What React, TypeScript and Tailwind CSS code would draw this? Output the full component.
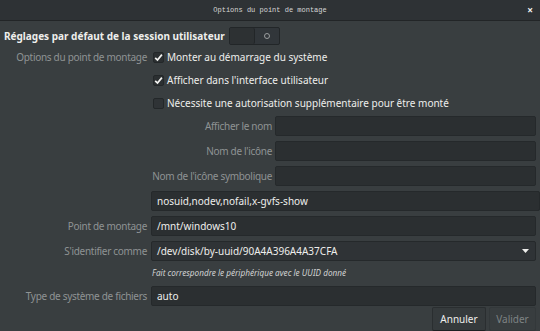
import React from 'react';

const FONT = "font-['Noto_Sans',_'Open_Sans',_sans-serif]";
const LABEL = 'text-[10px] tracking-[-0.3px] text-[#8f9394]';

const Check = ({ checked }: { checked: boolean }) => (
  <span
    className={`flex h-[11px] w-[11px] shrink-0 items-center justify-center rounded-[2px] border border-[#232729] ${
      checked ? 'bg-[#2b2f31]' : 'bg-[#2f3336]'
    }`}
  >
    {checked && (
      <svg width="9" height="9" viewBox="0 0 9 9">
        <path d="M1.2 4.8 L3.5 7.1 L7.9 1.6" fill="none" stroke="#f2f2f0" strokeWidth="1.7" />
      </svg>
    )}
  </span>
);

const Entry = ({ value, className = '' }: { value?: string; className?: string }) => (
  <div
    className={`flex h-[20px] items-center whitespace-nowrap rounded-[2px] border border-[#25292b] bg-[#2b2f31] px-[5px] text-[10px] text-[#eeeeec] ${className}`}
  >
    {value}
  </div>
);

export default function App() {
  const checks = [
    { label: 'Monter au démarrage du système', checked: true },
    { label: "Afficher dans l'interface utilisateur", checked: true },
    { label: 'Nécessite une autorisation supplémentaire pour être monté', checked: false },
  ];
  const named = ['Afficher le nom', "Nom de l'icône", "Nom de l'icône symbolique"];

  return (
    <div className={`h-[331px] w-[540px] overflow-hidden bg-[#393e40] ${FONT}`}>
      {/* title bar */}
      <div className="relative flex h-[21px] items-center justify-center border-b border-[#222527] bg-[#2e3235]">
        <span className="font-['Liberation_Mono',_monospace] text-[7px] text-[#d6d7d6]">Options du point de montage</span>
        <span className="absolute right-[7px] top-[5px] text-[10px] font-bold leading-none text-[#f4f4f4]">×</span>
      </div>

      {/* session defaults */}
      <div className="mt-[6px] flex h-[18px] items-center pl-[4px]">
        <span className="w-[225px] shrink-0 whitespace-nowrap text-[10px] font-bold text-[#eeeeec]">
          Réglages par défaut de la session utilisateur
        </span>
        <div className="flex h-[18px] w-[51px] rounded-[2px] border border-[#222628] bg-[#31363a]">
          <div className="h-full w-[25px] rounded-[2px] border-r border-[#222628] bg-[#2d3133]" />
          <div className="flex flex-1 items-center justify-center">
            <span className="h-[6px] w-[6px] rounded-full border border-[#9a9d9e]" />
          </div>
        </div>
      </div>

      {/* form */}
      <div className="mt-[1px] grid grid-cols-[147px_1fr] gap-x-[4px] pr-[4px] whitespace-nowrap">
        <div className={`flex h-[23px] items-center justify-end ${LABEL}`}>Options du point de montage</div>
        <div className="flex flex-col">
          {checks.map((c) => (
            <div key={c.label} className="flex h-[23px] items-center gap-[3px] pl-[2px] text-[10px] text-[#eeeeec]">
              <Check checked={c.checked} />
              <span>{c.label}</span>
            </div>
          ))}
          <div className="mt-[1px] grid grid-cols-[121px_1fr] gap-x-[3px] gap-y-[5px]">
            {named.map((n) => (
              <React.Fragment key={n}>
                <div className={`flex h-[20px] items-center justify-end ${LABEL}`}>{n}</div>
                <Entry />
              </React.Fragment>
            ))}
          </div>
          <Entry value="nosuid,nodev,nofail,x-gvfs-show" className="mt-[5px] mr-[-4px]" />
        </div>

        <div className={`mt-[5px] flex h-[20px] items-center justify-end ${LABEL}`}>Point de montage</div>
        <Entry value="/mnt/windows10" className="mt-[5px]" />

        <div className={`mt-[5px] flex h-[20px] items-center justify-end ${LABEL}`}>S'identifier comme</div>
        <div className="mt-[5px] flex h-[20px] items-center justify-between rounded-[2px] border border-[#25292b] bg-[#2f3336] px-[5px] text-[10px] text-[#eeeeec]">
          <span>/dev/disk/by-uuid/90A4A396A4A37CFA</span>
          <svg width="7" height="5" viewBox="0 0 7 5" className="mr-[1px]">
            <path d="M0 0 L7 0 L3.5 4 Z" fill="#eeeeec" />
          </svg>
        </div>

        <div />
        <div className="flex h-[25px] items-center pl-[1px] text-[8.2px] italic text-[#d0d2d2]">
          Fait correspondre le périphérique avec le UUID donné
        </div>

        <div className={`flex h-[20px] items-center justify-end ${LABEL}`}>Type de système de fichiers</div>
        <Entry value="auto" />
      </div>

      {/* buttons */}
      <div className="mt-[1px] flex justify-end gap-[3px] pr-[4px]">
        <div className="flex h-[24px] w-[54px] items-center justify-center rounded-[2px] border border-[#2a2e30] border-b-[#1d2022] bg-[#353a3c] text-[10px] text-[#eeeeec]">
          Annuler
        </div>
        <div className="flex h-[24px] w-[47px] items-center justify-center rounded-[2px] border border-[#33383a] bg-[#383d3f] text-[10px] text-[#7e8384]">
          Valider
        </div>
      </div>
    </div>
  );
}
